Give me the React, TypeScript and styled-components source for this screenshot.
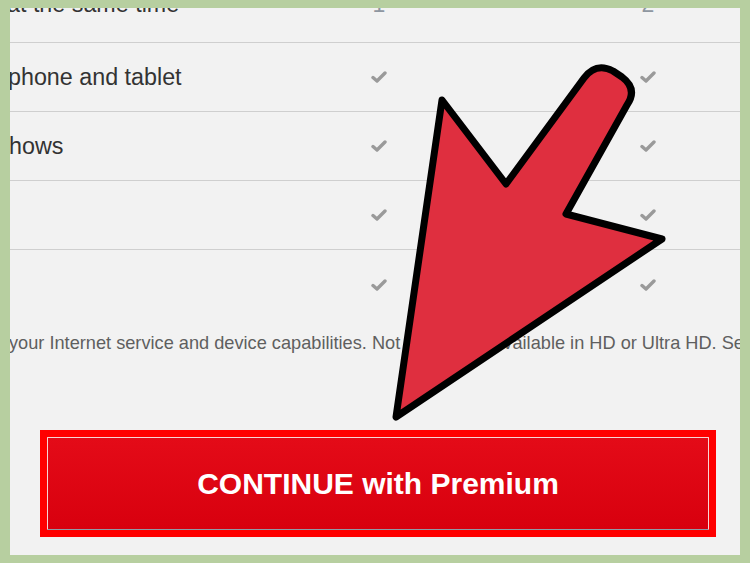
import React from "react";
import styled, { createGlobalStyle } from "styled-components";

const Global = createGlobalStyle`
  html, body { margin: 0; padding: 0; }
  body {
    background: #b7cfa0;
    font-family: "Liberation Sans", Arial, sans-serif;
  }
`;

const Page = styled.div`
  position: relative;
  width: 750px;
  height: 563px;
  padding: 8px 10px;
  box-sizing: border-box;
  background: #b7cfa0;
`;

const Panel = styled.div`
  width: 730px;
  height: 547px;
  background: #f2f2f2;
  overflow: hidden;
  display: flex;
  flex-direction: column;
`;

const Table = styled.div`
  display: flex;
  flex-direction: column;
`;

const Row = styled.div<{ $h: number; $line?: boolean }>`
  display: grid;
  grid-template-columns: 192px 354px 184px;
  align-items: center;
  height: ${(p) => p.$h}px;
  box-sizing: border-box;
  border-bottom: ${(p) => (p.$line ? "1px solid #cfcfcf" : "none")};
`;

const Label = styled.div<{ $shift?: number; $top?: number }>`
  font-size: 23.3px;
  line-height: 26px;
  color: #333;
  white-space: nowrap;
  margin-left: ${(p) => p.$shift ?? 0}px;
  align-self: ${(p) => (p.$top !== undefined ? "start" : "center")};
  margin-top: ${(p) => p.$top ?? 0}px;
`;

const Cell = styled.div<{ $top?: number }>`
  display: flex;
  justify-content: center;
  align-self: ${(p) => (p.$top !== undefined ? "start" : "center")};
  margin-top: ${(p) => p.$top ?? 0}px;
  font-size: 23px;
  line-height: 26px;
  color: #8e96a0;
`;

const Check = () => (
  <svg width="16" height="12" viewBox="0 0 16 12">
    <path
      d="M2 6.5 L6 10 L14 2"
      fill="none"
      stroke="#9a9a9a"
      strokeWidth="3.4"
      strokeLinecap="round"
      strokeLinejoin="round"
    />
  </svg>
);

const Footnote = styled.div`
  margin-top: 13px;
  font-size: 18.2px;
  line-height: 22px;
  color: #5f5f5f;
  white-space: nowrap;
  margin-left: -1px;
`;

const ButtonFrame = styled.div`
  margin: auto 24px 18px 30px;
  border: 7px solid #ff0000;
  background: #ff0000;
  height: 107px;
  box-sizing: border-box;
  display: flex;
`;

const Button = styled.button`
  flex: 1;
  margin: 0;
  border: 1px solid #f6d6d6;
  border-bottom-color: #8f9aa6;
  border-radius: 1px;
  background: linear-gradient(#e40b18, #d8000e);
  color: #fff;
  font-family: "Liberation Sans", Arial, sans-serif;
  font-weight: bold;
  font-size: 30px;
  display: flex;
  align-items: center;
  justify-content: center;
  padding: 0 0 0 0;
  cursor: pointer;
`;

const Overlay = styled.svg`
  position: absolute;
  left: 0;
  top: 0;
  pointer-events: none;
`;

export default function App() {
  return (
    <>
      <Global />
      <Page>
        <Panel>
          <Table>
            <Row $h={35} $line>
              <Label $shift={-3} $top={-17}>at the same time</Label>
              <Cell $top={-17}>1</Cell>
              <Cell $top={-17}>2</Cell>
            </Row>
            <Row $h={69} $line>
              <Label $shift={-2}>phone and tablet</Label>
              <Cell><Check /></Cell>
              <Cell><Check /></Cell>
            </Row>
            <Row $h={69} $line>
              <Label $shift={-1}>hows</Label>
              <Cell><Check /></Cell>
              <Cell><Check /></Cell>
            </Row>
            <Row $h={69} $line>
              <Label />
              <Cell><Check /></Cell>
              <Cell><Check /></Cell>
            </Row>
            <Row $h={69}>
              <Label />
              <Cell><Check /></Cell>
              <Cell><Check /></Cell>
            </Row>
          </Table>
          <Footnote>
            your Internet service and device capabilities. Not all content available in HD or Ultra HD. See Terms of Use for more details.
          </Footnote>
          <ButtonFrame>
            <Button>CONTINUE with Premium</Button>
          </ButtonFrame>
        </Panel>
        <Overlay width="750" height="563" viewBox="0 0 750 563">
          <path
            d="M396,417 L442,100 L506,184 L584,78 Q596,62 613,71 L622,77 Q638,89 627,105 L566,214 L662,239 Z"
            fill="#df2f3f"
            stroke="#000"
            strokeWidth="7"
            strokeLinejoin="round"
          />
        </Overlay>
      </Page>
    </>
  );
}
